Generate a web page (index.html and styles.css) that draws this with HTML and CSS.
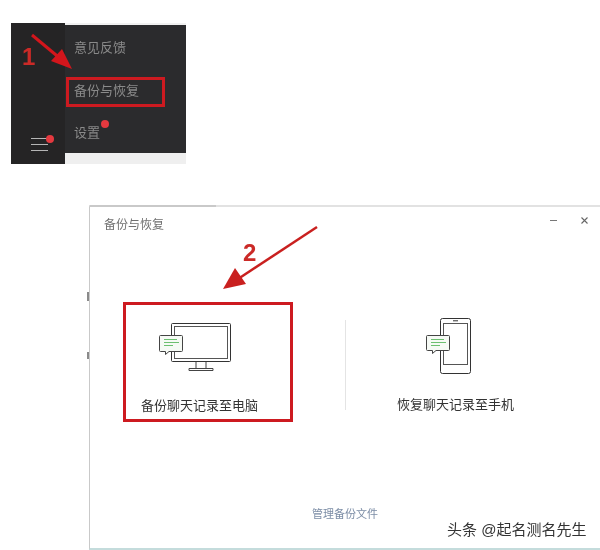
FILE: index.html
```html
<!DOCTYPE html>
<html lang="zh-CN">
<head>
    <meta charset="UTF-8">
    <meta name="viewport" content="width=device-width, initial-scale=1.0">
    <title>备份与恢复</title>
    <link rel="stylesheet" href="styles.css">
</head>
<body>

<div class="canvas">

    <!-- Menu screenshot -->
    <div class="menu-shot">
        <div class="sidebar">
            <div class="hamburger">
                <span></span>
                <span></span>
                <span></span>
                <i class="dot"></i>
            </div>
        </div>
        <div class="menu">
            <div class="menu-list">
                <p class="menu-item">意见反馈</p>
                <p class="menu-item">备份与恢复</p>
                <p class="menu-item">设置<i class="dot"></i></p>
            </div>
            <div class="menu-strip"></div>
        </div>
    </div>

    <!-- Dialog screenshot -->
    <div class="speck speck-top"></div>
    <div class="speck speck-bottom"></div>
    <div class="dialog">
        <div class="titlebar">
            <span class="title">备份与恢复</span>
            <div class="window-btns">
                <svg width="10" height="10" viewBox="0 0 10 10"><path d="M1 4.5h7" stroke="#777" fill="none"/></svg>
                <svg width="10" height="10" viewBox="0 0 10 10"><path d="M1.5 1.5l6 6M7.5 1.5l-6 6" stroke="#666" stroke-width="1.1" fill="none"/></svg>
            </div>
        </div>

        <div class="options">
            <div class="option option-pc">
                <svg class="icon" width="74" height="50" viewBox="0 0 74 50">
                    <rect x="12.5" y="0.5" width="59" height="38" rx="1" fill="#fff" stroke="#333"/>
                    <rect x="15.5" y="3.5" width="53" height="32" fill="#fff" stroke="#555"/>
                    <path d="M37 39v6M47 39v6M30 45.5h24v2H30z" fill="#fff" stroke="#444"/>
                    <path d="M1.5 12.5h21a1 1 0 0 1 1 1v14a1 1 0 0 1-1 1H10l-3.500 3v-3H1.500a1 1 0 0 1-1-1v-14a1 1 0 0 1 1-1z" fill="#f6faf5" stroke="#444"/>
                    <path d="M5 16.500h13M5 19.500h15M5 22.500h9" stroke="#6cc070" fill="none"/>
                </svg>
                <span class="option-label">备份聊天记录至电脑</span>
            </div>
            <div class="divider"></div>
            <div class="option option-phone">
                <svg class="icon" width="46" height="57" viewBox="0 0 46 57">
                    <rect x="14.500" y="0.500" width="30" height="55" rx="2" fill="#fff" stroke="#333"/>
                    <rect x="17.500" y="5.500" width="24" height="41" fill="#fff" stroke="#555"/>
                    <path d="M27 2.800h5" stroke="#333" fill="none"/>
                    <path d="M1.500 17.500h21a1 1 0 0 1 1 1v13a1 1 0 0 1-1 1H10l-3.500 3v-3H1.500a1 1 0 0 1-1-1v-13a1 1 0 0 1 1-1z" fill="#f6faf5" stroke="#444"/>
                    <path d="M5 21.500h13M5 24.500h15M5 27.500h9" stroke="#6cc070" fill="none"/>
                </svg>
                <span class="option-label">恢复聊天记录至手机</span>
            </div>
        </div>

        <a class="manage-link">管理备份文件</a>
    </div>

    <!-- Annotations drawn over the screenshots -->
    <div class="red-box box-menu"></div>
    <div class="red-box box-backup"></div>
    <span class="step step-1">1</span>
    <span class="step step-2">2</span>
    <svg class="arrows" width="600" height="550" viewBox="0 0 600 550">
        <path d="M32 35L62 60" stroke="#d3161c" stroke-width="3" fill="none"/>
        <path d="M72 69L51 61L62 49z" fill="#d3161c"/>
        <path d="M317 227L238 279" stroke="#c9201f" stroke-width="2.500" fill="none"/>
        <path d="M223 289L235 268L246 284z" fill="#c9201f"/>
    </svg>

    <span class="watermark">头条 @起名测名先生</span>
</div>

</body>
</html>
```

FILE: styles.css
```css
body {
    margin: 0;
    background-color: #fff;
    font-family: "Liberation Sans", "Noto Sans CJK SC", sans-serif;
}
p {
    margin: 0;
}
.canvas {
    position: relative;
    width: 600px;
    height: 550px;
    overflow: hidden;
    background-color: #fff;
    filter: blur(0.35px);
}

/* Menu screenshot */
.menu-shot {
    position: absolute;
    left: 11px;
    top: 23px;
    width: 175px;
    height: 141px;
    display: flex;
    background-color: #2b2b2d;
}
.sidebar {
    width: 54px;
    background-color: #252425;
    display: flex;
    justify-content: center;
    align-items: flex-end;
    padding-bottom: 13px;
    box-sizing: border-box;
}
.hamburger {
    position: relative;
    width: 17px;
    margin-left: 2px;
    display: flex;
    flex-direction: column;
    gap: 5px;
}
.hamburger span {
    height: 1px;
    background-color: #b5b5b5;
}
.dot {
    position: absolute;
    width: 8px;
    height: 8px;
    border-radius: 50%;
    background-color: #e5393f;
}
.hamburger .dot {
    right: -6px;
    top: -3px;
}
.menu {
    flex: 1;
    display: flex;
    flex-direction: column;
    border-top: 2px solid #f1f1f1;
}
.menu-list {
    flex: 1;
    padding: 12px 0 0 9px;
    display: flex;
    flex-direction: column;
    gap: 21.5px;
}
.menu-item {
    position: relative;
    font-size: 13px;
    line-height: 21px;
    color: #8a8a8a;
}
.menu-item .dot {
    left: 27px;
    top: -2px;
}
.menu-strip {
    height: 11px;
    background-color: #efefef;
}

/* Dialog screenshot */
.dialog {
    position: absolute;
    left: 89px;
    top: 205px;
    right: 0;
    bottom: 0;
    background-color: #fff;
    border-top: 2px solid #e2e2e2;
    border-left: 1px solid #c9c9c9;
    border-bottom: 2px solid #c4dcdc;
    display: flex;
    flex-direction: column;
}
.dialog::before {
    content: "";
    position: absolute;
    left: 0;
    top: -2px;
    width: 126px;
    height: 2px;
    background-color: #c9c9c9;
}
.speck {
    position: absolute;
    left: 87px;
    width: 2px;
    background-color: #8a8a8a;
}
.speck-top {
    top: 292px;
    height: 9px;
}
.speck-bottom {
    top: 352px;
    height: 7px;
}
.titlebar {
    display: flex;
    justify-content: space-between;
    padding: 9px 10px 0 14px;
    height: 36px;
    box-sizing: border-box;
}
.title {
    font-size: 12px;
    line-height: 18px;
    color: #707070;
}
.window-btns {
    display: flex;
    gap: 21px;
}
.options {
    display: flex;
    align-items: flex-start;
    height: 169px;
    margin-top: 75px;
}
.option {
    display: flex;
    flex-direction: column;
    align-items: flex-start;
}
.option-pc {
    margin-left: 51px;
    width: 150px;
}
.option-phone {
    margin-left: 51px;
}
.option-pc .icon {
    margin: 5px 0 0 18px;
}
.option-phone .icon {
    margin-left: 29px;
}
.option-label {
    font-size: 13px;
    line-height: 20px;
    color: #333;
    margin-top: 23px;
    white-space: nowrap;
}
.option-phone .option-label {
    margin-top: 20px;
}
.divider {
    width: 1px;
    height: 90px;
    margin: 2px 0 0 54px;
    background-color: #e4e4e4;
}
.manage-link {
    align-self: flex-start;
    margin: 19px 0 0 222px;
    font-size: 11px;
    line-height: 16px;
    color: #7c8da6;
}

/* Annotations */
.red-box {
    position: absolute;
    border: 3px solid #cd1a20;
    box-sizing: border-box;
}
.box-menu {
    left: 66px;
    top: 77px;
    width: 99px;
    height: 30px;
}
.box-backup {
    left: 123px;
    top: 302px;
    width: 170px;
    height: 120px;
}
.step {
    position: absolute;
    font-weight: bold;
    color: #cb2a27;
}
.step-1 {
    left: 22px;
    top: 43px;
    font-size: 24px;
    line-height: 27px;
}
.step-2 {
    left: 243px;
    top: 239px;
    font-size: 24px;
    line-height: 27px;
}
.arrows {
    position: absolute;
    left: 0;
    top: 0;
}
.watermark {
    position: absolute;
    left: 447px;
    top: 520px;
    font-size: 15px;
    line-height: 20px;
    color: #333;
    white-space: nowrap;
}
```
